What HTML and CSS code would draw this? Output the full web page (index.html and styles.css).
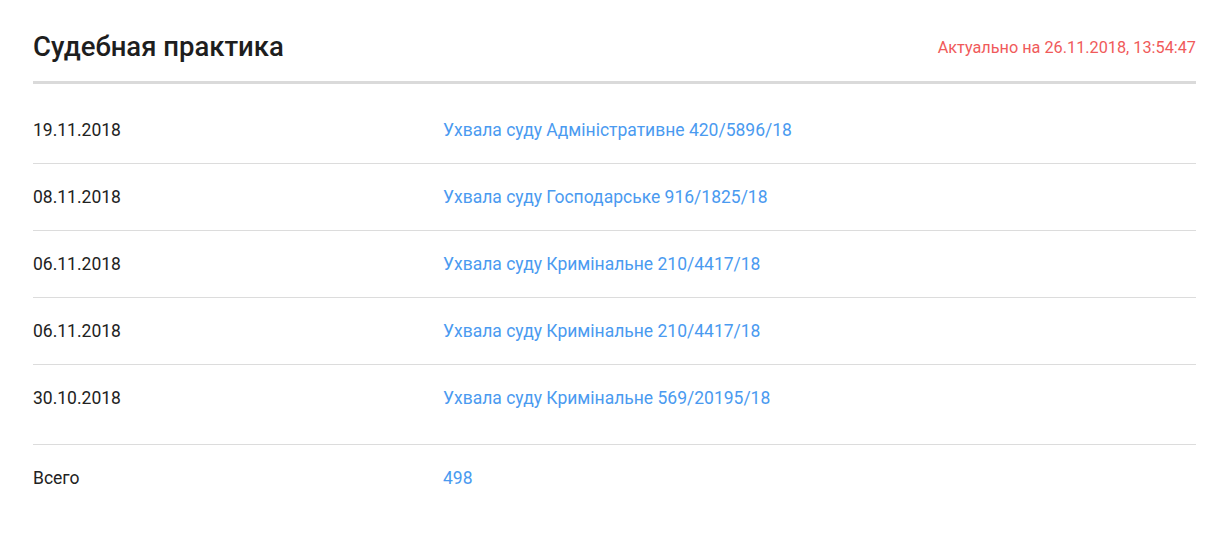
FILE: index.html
```html
<!DOCTYPE html>
<html lang="ru">
<head>
<meta charset="utf-8">
<link rel="stylesheet" href="styles.css">
</head>
<body>
<div class="panel">
  <div class="panel-head">
    <h2 class="title">Судебная практика</h2>
    <span class="updated">Актуально на 26.11.2018, 13:54:47</span>
  </div>
  <div class="rows">
    <div class="row"><span class="date">19.11.2018</span><a class="link" href="#">Ухвала суду Адміністративне 420/5896/18</a></div>
    <div class="row"><span class="date">08.11.2018</span><a class="link" href="#">Ухвала суду Господарське 916/1825/18</a></div>
    <div class="row"><span class="date">06.11.2018</span><a class="link" href="#">Ухвала суду Кримінальне 210/4417/18</a></div>
    <div class="row"><span class="date">06.11.2018</span><a class="link" href="#">Ухвала суду Кримінальне 210/4417/18</a></div>
    <div class="row"><span class="date">30.10.2018</span><a class="link" href="#">Ухвала суду Кримінальне 569/20195/18</a></div>
  </div>
  <div class="total">
    <span class="total-label">Всего</span><a class="link" href="#">498</a>
  </div>
</div>
</body>
</html>
```

FILE: styles.css
```css
html, body {
  margin: 0;
  padding: 0;
  background: #fff;
}
body {
  font-family: Roboto, "Noto Sans", "Liberation Sans", sans-serif;
  color: #222;
}
.panel {
  padding: 0 29px 0 33px;
}
.panel-head {
  display: flex;
  justify-content: space-between;
  align-items: flex-end;
  height: 84px;
  box-sizing: border-box;
  padding-bottom: 19px;
  border-bottom: 3px solid #dadada;
}
.title {
  margin: 0;
  font-size: 27.5px;
  font-weight: 500;
  line-height: 30px;
  color: #1e1e1e;
}
.updated {
  font-size: 16.25px;
  color: #f05a5a;
  line-height: 20px;
  padding-bottom: 4px;
}
.rows {
  margin-top: 13px;
}
.row, .total {
  display: grid;
  grid-template-columns: 410px 1fr;
  align-items: center;
  height: 67px;
  box-sizing: border-box;
  font-size: 17.5px;
  border-bottom: 1px solid #dcdcdc;
}
.row:last-child {
  border-bottom: none;
  height: 66px;
}
.total {
  margin-top: 13px;
  border-bottom: none;
  border-top: 1px solid #dcdcdc;
}
.date, .total-label {
  color: #222;
}
.link {
  color: #4a9af0;
  text-decoration: none;
}
```
